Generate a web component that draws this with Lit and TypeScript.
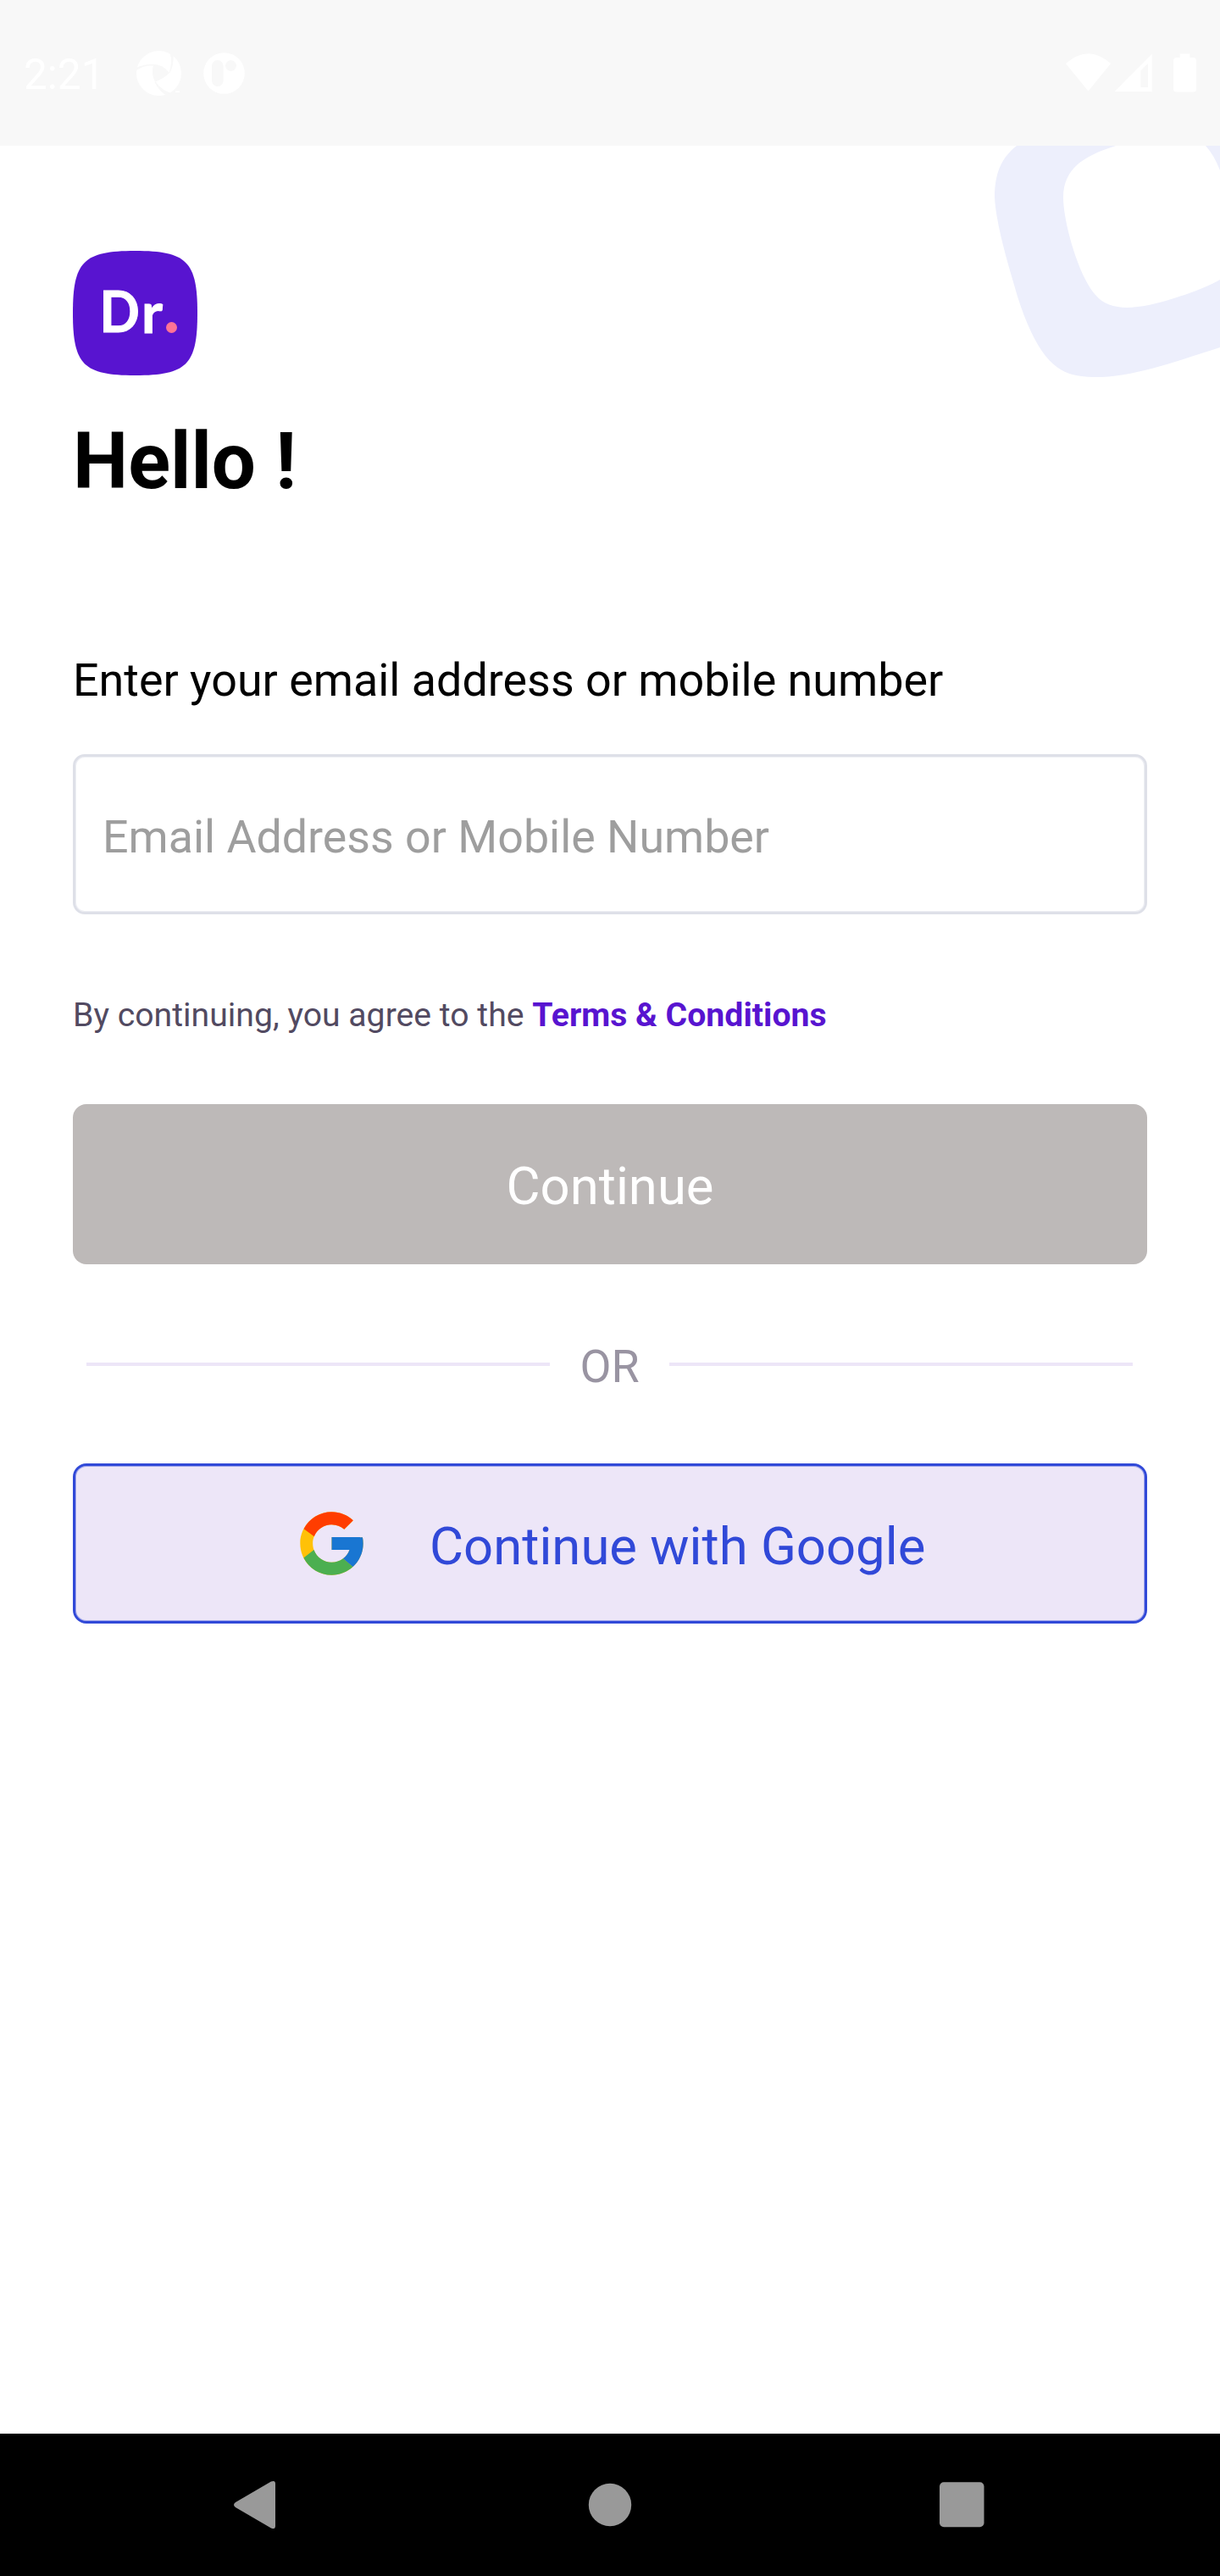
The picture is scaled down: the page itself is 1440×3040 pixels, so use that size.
import { LitElement, html, css, svg } from "lit";
import { customElement } from "lit/decorators.js";

@customElement("status-bar")
class StatusBar extends LitElement {
  static styles = css`
    :host { display: flex; justify-content: space-between; height: 172px; background: #f8f8f8; color: #fff; }
    .left, .right { display: flex; height: 172px; }
    .time { margin: 60px 0 0 28px; width: 133px; font-size: 49.5px; line-height: 56px; white-space: nowrap; }
    .app { margin-top: 60px; width: 54px; height: 54px; }
    .gap { margin-left: 24px; width: 50px; }
    .sys { width: 182px; height: 172px; }
  `;
  render() {
    return html`
      <div class="left">
        <span class="time">2:21</span>
        <svg class="app" viewBox="0 0 54 54">
          <circle cx="26.5" cy="26.5" r="26.5" fill="#fff" />
          <g fill="#f8f8f8">
            <path d="M20 17Q30 17 39 26Q32 33 22 36.500Q17 27 20 17Z" />
            <path d="M0 23Q8 16.800 20 17.500L39 26Q31 15.500 19 15.800Q9 16 0.500 19.500Z" />
            <path d="M38.500 26Q43 14 39.500 2L43.500 4.500Q44.500 16 39.500 26Z" />
            <path d="M21.500 37Q27 48 36 53L41 50Q29 46 22.500 36Z" />
          </g>
          <rect x="46" y="47.500" width="5" height="1.500" fill="#fff" />
        </svg>
        <svg class="app gap" viewBox="0 0 50 54">
          <circle cx="25.500" cy="26.500" r="24.300" fill="#fff" />
          <rect x="11" y="11" width="13.500" height="31" rx="6.700" fill="#f8f8f8" />
          <circle cx="33.500" cy="17.500" r="6.500" fill="#f8f8f8" />
        </svg>
      </div>
      <div class="right">
        <svg class="sys" viewBox="1258 0 182 172" fill="#fff">
          <path d="M1258 75Q1284.500 51.500 1311 75L1284.500 107.500Z" />
          <path fill-rule="evenodd" d="M1315.500 108L1359.700 63.500V108ZM1346.300 83.500V103H1355V75Z" />
          <path d="M1392.700 63.500H1404.300V68H1408.500Q1412 68 1412 71.500V105Q1412 108.500 1408.500 108.500H1388.500Q1385 108.500 1385 105V71.500Q1385 68 1388.500 68H1392.700Z" />
        </svg>
      </div>`;
  }
}

@customElement("brand-logo")
class BrandLogo extends LitElement {
  static styles = css`
    :host { display: block; width: 147px; height: 147px; }
    .logo { display: block; width: 147px; height: 147px; }
    .word { font: 700 67px Lato, sans-serif; fill: #fff; stroke: #fff; stroke-width: 1px; }
  `;
  render() {
    return html`<svg class="logo" viewBox="0 0 147 147">
      <path d="M73.500 0C134.500 0 147 12.500 147 73.500S134.500 147 73.500 147 0 134.500 0 73.500 12.500 0 73.500 0Z" fill="#5814d0" />
      <g transform="translate(35.700 0) scale(0.930 1) translate(-35.700 0)">
        <text class="word" x="31.200" y="96.500">D</text>
      </g>
      <text class="word" x="81" y="96.500">r</text>
      <circle cx="116.500" cy="90.500" r="6.500" fill="#ff7396" />
    </svg>`;
  }
}

const googleMark = svg`
  <path fill="#FFC107" d="M43.611 20.083H42V20H24v8h11.303c-1.649 4.657-6.080 8-11.303 8-6.627 0-12-5.373-12-12s5.373-12 12-12c3.059 0 5.842 1.154 7.961 3.039l5.657-5.657C34.046 6.053 29.268 4 24 4 12.955 4 4 12.955 4 24s8.955 20 20 20 20-8.955 20-20c0-1.341-.138-2.650-.389-3.917z" />
  <path fill="#FF3D00" d="M6.306 14.691l6.571 4.819C14.655 15.108 18.961 12 24 12c3.059 0 5.842 1.154 7.961 3.039l5.657-5.657C34.046 6.053 29.268 4 24 4 16.318 4 9.656 8.337 6.306 14.691z" />
  <path fill="#4CAF50" d="M24 44c5.166 0 9.860-1.977 13.409-5.192l-6.190-5.238C29.211 35.091 26.715 36 24 36c-5.202 0-9.619-3.317-11.283-7.946l-6.522 5.025C9.505 39.556 16.227 44 24 44z" />
  <path fill="#1976D2" d="M43.611 20.083H42V20H24v8h11.303c-.792 2.237-2.231 4.166-4.087 5.571l6.193 5.238C36.971 39.205 44 34 44 24c0-1.341-.138-2.650-.389-3.917z" />`;

@customElement("app-root")
class AppRoot extends LitElement {
  static styles = css`
    :host { display: flex; flex-direction: column; width: 1440px; height: 3040px; background: #fff; font-family: Roboto, sans-serif; color: #000; }
    * { box-sizing: border-box; }
    .page { position: relative; flex: 1; display: flex; flex-direction: column; padding: 124px 86px 0; overflow: hidden; }
    .shape { position: absolute; top: 0; right: 0; width: 290px; height: 288px; }
    h1 { margin: 47px 0 0; font-size: 92.3px; line-height: 110px; font-weight: 700; white-space: nowrap; }
    .label { margin-top: 171px; font-size: 53.85px; line-height: 64px; white-space: nowrap; }
    .field { margin-top: 55px; width: 1268px; height: 189px; border: 3px solid #dee0e8; box-shadow: inset 0 0 0 1px #eeeff4; border-radius: 14px; background: #fff; padding: 5px 32px 0; font: 400 53.75px Roboto, sans-serif; outline: none; }
    .field::placeholder { color: #9e9e9e; opacity: 1; }
    .terms { margin-top: 95px; font-size: 39.2px; line-height: 48px; color: #524a61; white-space: nowrap; }
    .link { font-weight: 700; color: #5814d0; }
    .btn { display: flex; align-items: center; width: 1268px; height: 189px; border: 0; border-radius: 16px; font: 400 61.6px/72px Roboto, sans-serif; white-space: nowrap; }
    .primary { justify-content: center; margin-top: 81px; background: #bdb9b8; color: #fff; padding: 5px 0 0; }
    .divider { display: flex; align-items: center; justify-content: space-between; margin: 83px 17px 0 16px; height: 70px; font-size: 53.8px; line-height: 64px; color: #9994a2; }
    .rule { width: 547px; height: 4px; background: #ede6f8; }
    .or { padding-top: 5px; }
    .google { margin-top: 82px; border: 3px solid #3149d8; box-shadow: inset 0 0 0 1px #a4a9ea; background: #ede6f8; color: #3149d8; padding: 0 0 0 256px; }
    .g { width: 93px; height: 93px; }
    .gtext { margin: 6px 0 0 69px; }
    .nav { display: block; height: 168px; background: #000; }
  `;
  render() {
    return html`
      <status-bar></status-bar>
      <main class="page">
        <svg class="shape" viewBox="0 0 290 288">
          <path fill="#edeffc" fill-rule="evenodd" d="M50 0C31 15 24 34 24 61C26 95 40 140 51 178C61 210 73 234 84 248C103 271 120 273 150 273C195 271 245 252 290 238V0ZM167 0H273Q283 11 290 29V158C270 170 229 183 206 188C180 193 157 193 143 176C123 154 105 90 105 61C105 27 129 12 167 0Z" />
        </svg>
        <brand-logo></brand-logo>
        <h1>Hello !</h1>
        <label class="label">Enter your email address or mobile number</label>
        <input class="field" placeholder="Email Address or Mobile Number" />
        <div class="terms">By continuing, you agree to the <span class="link">Terms &amp; Conditions</span></div>
        <button class="btn primary">Continue</button>
        <div class="divider"><span class="rule"></span><span class="or">OR</span><span class="rule"></span></div>
        <button class="btn google">
          <svg class="g" viewBox="-1 -1 50 50">${googleMark}</svg>
          <span class="gtext">Continue with Google</span>
        </button>
      </main>
      <svg class="nav" viewBox="0 0 1440 168" fill="#999">
        <path d="M278 81L320 56.500Q325 54.500 325 59V109Q325 113.500 320 111.500L278 87Q274 84 278 81Z" />
        <circle cx="720" cy="84" r="25.200" />
        <rect x="1109" y="57.300" width="52.500" height="53" rx="5" />
      </svg>`;
  }
}
